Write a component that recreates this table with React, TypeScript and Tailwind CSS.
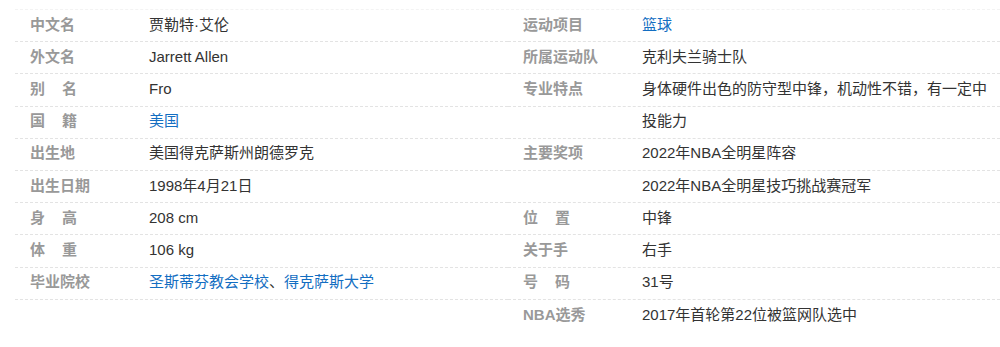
type Item = { label: React.ReactNode; value: React.ReactNode; link?: boolean; last?: boolean };

const Spaced = ({ a, b }: { a: string; b: string }) => (
  <>
    {a}
    <span className="ml-[17px]">{b}</span>
  </>
);

const leftItems: Item[] = [
  { label: '中文名', value: '贾勒特·艾伦' },
  { label: '外文名', value: 'Jarrett Allen' },
  { label: <Spaced a="别" b="名" />, value: 'Fro' },
  { label: <Spaced a="国" b="籍" />, value: '美国', link: true },
  { label: '出生地', value: '美国得克萨斯州朗德罗克' },
  { label: '出生日期', value: '1998年4月21日' },
  { label: <Spaced a="身" b="高" />, value: '208 cm' },
  { label: <Spaced a="体" b="重" />, value: '106 kg' },
  {
    label: '毕业院校',
    value: (
      <>
        <span className="text-[#136ec2]">圣斯蒂芬教会学校</span>
        <span>、</span>
        <span className="text-[#136ec2]">得克萨斯大学</span>
      </>
    ),
  },
];

const rightItems: Item[] = [
  { label: '运动项目', value: '篮球', link: true },
  { label: '所属运动队', value: '克利夫兰骑士队' },
  { label: '专业特点', value: '身体硬件出色的防守型中锋，机动性不错，有一定中' },
  { label: '', value: '投能力' },
  { label: '主要奖项', value: '2022年NBA全明星阵容' },
  { label: '', value: '2022年NBA全明星技巧挑战赛冠军' },
  { label: <Spaced a="位" b="置" />, value: '中锋' },
  { label: '关于手', value: '右手' },
  { label: <Spaced a="号" b="码" />, value: '31号' },
  { label: 'NBA选秀', value: '2017年首轮第22位被篮网队选中', last: true },
];

const Row = ({ item }: { item: Item }) => (
  <div
    className={`flex items-center h-[32.2px] pb-[2px] ${
      item.last ? '' : 'border-b border-dashed border-[#e3e3e3]'
    }`}
  >
    <div className="w-[119px] shrink-0 pl-[15px] font-bold text-[#999] whitespace-nowrap">{item.label}</div>
    <div className={`pl-[15px] whitespace-nowrap ${item.link ? 'text-[#136ec2]' : 'text-[#333]'}`}>{item.value}</div>
  </div>
);

export default function App() {
  return (
    <div
      className="w-[1000px] h-[347px] bg-white pt-[9px] text-[15px] leading-[22px]"
      style={{ fontFamily: '"Liberation Sans", Arial, "Noto Sans CJK SC", sans-serif' }}
    >
      <div className="flex ml-[15px] border-t border-dashed border-[#f3f3f3]">
        <div className="w-[493px] shrink-0 flex flex-col">
          {leftItems.map((it, i) => (
            <Row key={i} item={it} />
          ))}
        </div>
        <div className="flex-1 flex flex-col">
          {rightItems.map((it, i) => (
            <Row key={i} item={it} />
          ))}
        </div>
      </div>
    </div>
  );
}
